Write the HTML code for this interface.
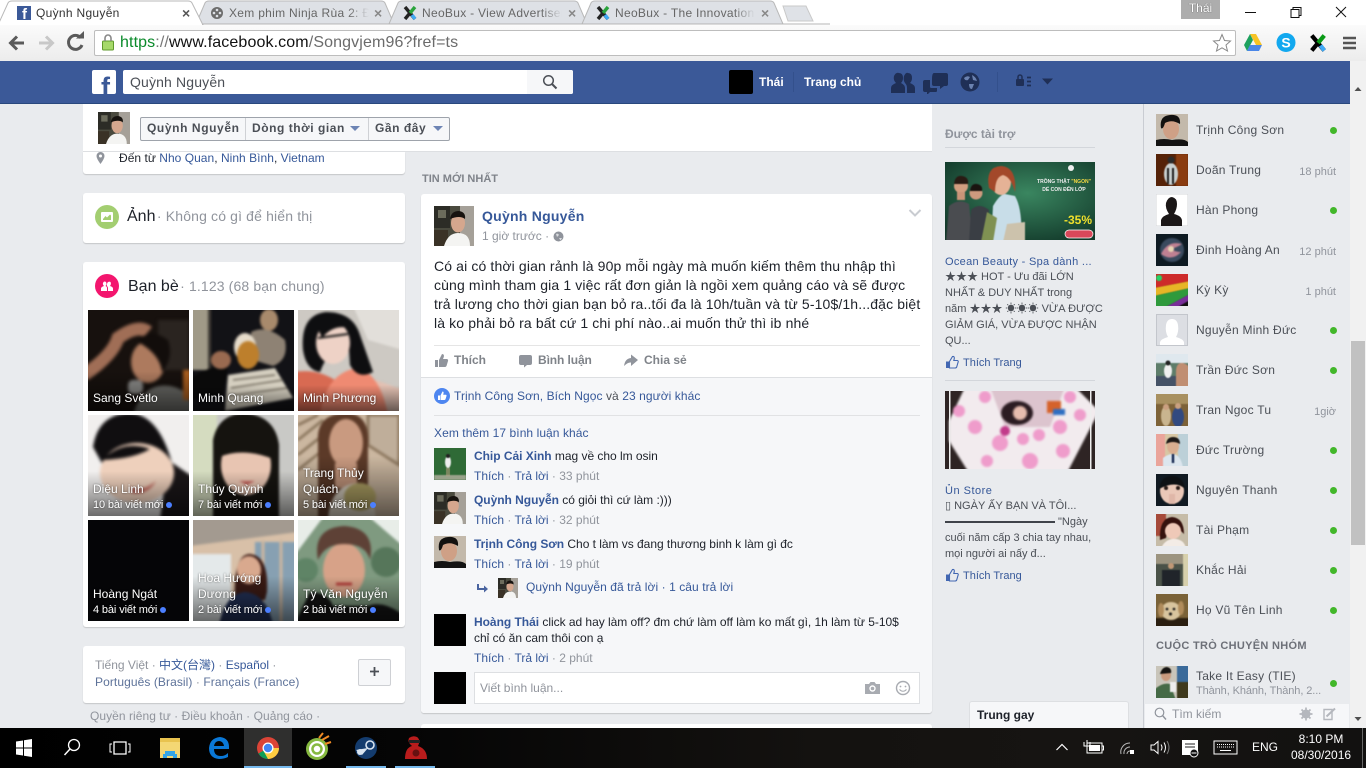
<!DOCTYPE html>
<html lang="vi"><head><meta charset="utf-8"><title>Quỳnh Nguyễn</title>
<style>
html,body{margin:0;padding:0;width:1366px;height:768px;overflow:hidden;background:#e9ebee}
body{position:relative;font:12px/16px "Liberation Sans","Noto Sans CJK SC",sans-serif;color:#1d2129}
.a{position:absolute}
.t{position:absolute;white-space:nowrap;line-height:16px}
.b{font-weight:bold}
.l{color:#365899}
.g{color:#90949c}
.card{position:absolute;background:#fff;border-radius:3px;box-shadow:0 1px 1px rgba(0,0,0,.16)}
svg{position:absolute;display:block;overflow:hidden}
.tab{color:#666;overflow:hidden;-webkit-mask-image:linear-gradient(90deg,#000 85%,transparent);mask-image:linear-gradient(90deg,#000 85%,transparent)}
.x{color:#6a6a6a;font-size:14px;font-weight:bold}
.tile{position:absolute;width:101px;height:101px;overflow:hidden;background:#222}
.tile svg{left:0;top:0}
.tile i{position:absolute;left:0;right:0;bottom:0;height:40px;background:linear-gradient(transparent,rgba(0,0,0,.55))}
.tile span{position:absolute;left:5px;color:#fff;white-space:nowrap;line-height:16px;text-shadow:0 0 2px rgba(0,0,0,.6)}
.tile .s{font-size:11px;bottom:3px;letter-spacing:-.12px}
.tile u{display:inline-block;width:6px;height:6px;border-radius:50%;background:#4b7fff;margin-left:3px;vertical-align:0}
.n{font-size:12px;color:#4b4f56;letter-spacing:.25px}
.d{position:absolute;left:1330px;width:7px;height:7px;border-radius:50%;background:#42b72a}
.m{position:absolute;right:30px;font-size:11px;color:#90949c;line-height:16px}
.ad{font-size:11px;color:#4b4f56}
.act{font-size:12px;color:#365899}
.act em{font-style:normal;color:#90949c}
.tb{color:#fff}
.p{font-size:14px;letter-spacing:.13px}
</style></head><body>

<svg width="0" height="0" style="position:absolute">
<defs>
<symbol id="qn" viewBox="0 0 40 40"><rect width="40" height="40" fill="#4a4a3e"/><rect x="0" y="0" width="16" height="22" fill="#2c2c26"/><rect x="4" y="4" width="8" height="8" fill="#6c6c5c"/><rect x="0" y="24" width="14" height="16" fill="#3a3226"/><rect x="26" y="0" width="14" height="40" fill="#a5a098"/><path d="M10 40 Q14 27 24 27 Q36 27 36 40Z" fill="#f4f4f2"/><ellipse cx="24" cy="17" rx="7" ry="9.5" fill="#d5a78e"/><path d="M16 13 Q17 5 25 5 Q32 6 31 13 Q26 9 16 13Z" fill="#17130f"/></symbol>
<symbol id="ntb" viewBox="0 0 16 16"><path d="M3 2 L13 14" stroke="#222" stroke-width="3.4"/><path d="M13 2 L8 8" stroke="#2aa43c" stroke-width="3.4"/><path d="M8 8 L3 14" stroke="#222" stroke-width="3.4"/><path d="M10 10 L13 14" stroke="#3fa9f5" stroke-width="3.4"/></symbol>
<symbol id="thumb" viewBox="0 0 14 14"><path d="M1 6.5h3v6.5H1z" fill="#4267b2"/><path d="M4.5 6.5 L7.5 1.5 Q9.5 1 9.3 3.5 L8.8 5.5 H12.5 Q13.7 6 13 7.5 L11.7 12 Q11.3 13 10 13 H4.5Z" fill="none" stroke="#4267b2" stroke-width="1.1"/></symbol>
</defs>
</svg>

<!-- CHROME -->
<div class="a" style="left:0;top:0;width:1366px;height:25px;background:#fff"></div>
<svg style="left:0;top:0" width="830" height="26">
<path d="M196 24 L205 3 Q206 1 209 1 H381 Q384 1 385 3 L394 24Z" fill="#dee1e6" stroke="#b9b9b9"/>
<path d="M389 24 L398 3 Q399 1 402 1 H574 Q577 1 578 3 L587 24Z" fill="#dee1e6" stroke="#b9b9b9"/>
<path d="M582 24 L591 3 Q592 1 595 1 H770 Q773 1 774 3 L783 24Z" fill="#dee1e6" stroke="#b9b9b9"/>
<path d="M783 6 H806 L813 21 H788Z" fill="#dfe2e7" stroke="#c9c9c9"/>
<path d="M0 24 H830" stroke="#b4b4b4"/>
<path d="M-2 25 L8 3 Q9 1 12 1 H188 Q191 1 192 3 L203 25Z" fill="#fff" stroke="#b9b9b9"/>
<rect x="-2" y="24" width="204" height="2" fill="#fff"/>
</svg>
<div class="a" style="left:17px;top:6px;width:14px;height:14px;background:#3b5998;overflow:hidden"><b style="position:absolute;left:5px;top:0;color:#fff;font:bold 15px/17px 'Liberation Sans',sans-serif">f</b></div>
<div class="t" style="left:36px;top:5px;width:140px;color:#333;letter-spacing:.3px">Quỳnh Nguyễn</div>
<div class="t x" style="left:182px;top:5px;color:#555">×</div>
<svg style="left:210px;top:6px" width="14" height="14" viewBox="0 0 14 14"><circle cx="7" cy="7" r="6" fill="#6c6c6c"/><circle cx="7" cy="4" r="1.3" fill="#dee1e6"/><circle cx="4" cy="7" r="1.3" fill="#dee1e6"/><circle cx="10" cy="7" r="1.3" fill="#dee1e6"/><circle cx="7" cy="10" r="1.3" fill="#dee1e6"/></svg>
<div class="t tab" style="left:229px;top:5px;width:140px;letter-spacing:.3px">Xem phim Ninja Rùa 2: Đậ</div>
<div class="t x" style="left:374px;top:5px;color:#888">×</div>
<svg style="left:402px;top:5px" width="16" height="16"><use href="#ntb"/></svg>
<div class="t tab" style="left:422px;top:5px;width:140px;letter-spacing:.3px">NeoBux - View Advertisen</div>
<div class="t x" style="left:568px;top:5px;color:#888">×</div>
<svg style="left:595px;top:5px" width="16" height="16"><use href="#ntb"/></svg>
<div class="t tab" style="left:615px;top:5px;width:140px;letter-spacing:.3px">NeoBux - The Innovation i</div>
<div class="t x" style="left:761px;top:5px;color:#888">×</div>

<div class="a" style="left:1181px;top:0;width:39px;height:19px;background:#adadad;color:#fff;text-align:center;font-size:12px;line-height:17px;text-shadow:0 0 1px #333">Thái</div>
<svg style="left:1240px;top:4px" width="112" height="16"><path d="M5 8.500H16" stroke="#111"/><path d="M51 5.500h8v8h-8zM53 5.500v-2h8v8h-2" fill="none" stroke="#111"/><path d="M96 3L106 13M106 3L96 13" stroke="#111"/></svg>

<div class="a" style="left:0;top:25px;width:1366px;height:36px;background:linear-gradient(#fbfbfb,#ececec)"></div>
<svg style="left:0;top:25px" width="95" height="36"><path d="M24 18H11M17 11.500L10.500 18L17 24.500" fill="none" stroke="#5a5a5a" stroke-width="3"/><path d="M39 18H52M46 11.500L52.500 18L46 24.500" fill="none" stroke="#c8c8c8" stroke-width="3"/><path d="M81 13 A7 7 0 1 0 82 20" fill="none" stroke="#5a5a5a" stroke-width="3"/><path d="M76 13.500H84V6Z" fill="#5a5a5a"/></svg>
<div class="a" style="left:94px;top:30px;width:1140px;height:24px;background:#fff;border:1px solid #bdbdbd;border-radius:2px"></div>
<svg style="left:100px;top:33px" width="16" height="20"><rect x="2.500" y="8" width="11" height="9" rx="1" fill="#a6d96a" stroke="#5f9a2c"/><path d="M5 8V5a3 3 0 0 1 6 0v3" fill="none" stroke="#888" stroke-width="1.600"/></svg>
<div class="t" style="left:120px;top:35px;font-size:16px;letter-spacing:.12px;color:#6b6b6b"><span style="color:#0a8a2a">https</span><span style="color:#777">://</span><span style="color:#111">www.facebook.com</span>/Songvjem96?fref=ts</div>
<svg style="left:1212px;top:33px" width="20" height="20"><path d="M10 1.500L12.500 7.500L18.500 8L14 12L15.500 18L10 14.800L4.500 18L6 12L1.500 8L7.500 7.500Z" fill="#fff" stroke="#888"/></svg>
<svg style="left:1243px;top:33px" width="20" height="19" viewBox="0 0 20 19"><path d="M7 1H13L19 12H13Z" fill="#f7c325"/><path d="M7 1L1 12L4 18L10 7Z" fill="#1da15e"/><path d="M4 18H16L19 12H7Z" fill="#4a86e8"/></svg>
<svg style="left:1276px;top:32px" width="20" height="21"><circle cx="10" cy="10.500" r="9.500" fill="#12a8ef"/><text x="10" y="15.500" text-anchor="middle" font-family="Liberation Sans" font-weight="bold" font-size="14" fill="#fff">S</text></svg>
<svg style="left:1308px;top:33px" width="20" height="20" viewBox="0 0 16 16"><path d="M3 2L13 14" stroke="#000" stroke-width="3.400"/><path d="M13 2L8 8" stroke="#0a9a16" stroke-width="3.400"/><path d="M8 8L3 14" stroke="#000" stroke-width="3.400"/><path d="M10 10L13 14" stroke="#3fa9f5" stroke-width="3.400"/></svg>
<svg style="left:1342px;top:35px" width="16" height="16"><path d="M1 3H14M1 8H14M1 13H14" stroke="#555" stroke-width="2.600"/></svg>

<!-- PAGE BG & SCROLLBAR -->
<div class="a" style="left:1350px;top:61px;width:16px;height:667px;background:#f1f1f1"></div>
<div class="a" style="left:1351px;top:341px;width:14px;height:204px;background:#c1c1c1"></div>
<svg style="left:1350px;top:84px" width="16" height="10"><path d="M4.500 7H11.500L8 3Z" fill="#505050"/></svg>
<svg style="left:1350px;top:714px" width="16" height="10"><path d="M4.500 3H11.500L8 7Z" fill="#505050"/></svg>

<!-- FB BAR -->
<div class="a" style="left:0;top:61px;width:1350px;height:42px;background:#3b5998;border-bottom:1px solid #29487d"></div>
<div class="a" style="left:92px;top:70px;width:24px;height:24px;background:#fff;border-radius:2px;overflow:hidden"><b style="position:absolute;left:9px;top:4px;color:#3b5998;font:bold 27px/26px 'Liberation Sans',sans-serif">f</b></div>
<div class="a" style="left:123px;top:70px;width:450px;height:24px;background:#fff;border-radius:2px;overflow:hidden"><div class="a" style="right:0;top:0;width:46px;height:24px;background:#f6f7f9"></div></div>
<div class="t" style="left:130px;top:74px;font-size:14px;letter-spacing:.15px;color:#4b4f56">Quỳnh Nguyễn</div>
<svg style="left:542px;top:74px" width="16" height="16"><circle cx="6.500" cy="6.500" r="4.800" fill="none" stroke="#4b4f56" stroke-width="1.500"/><path d="M10 10L14.500 14.500" stroke="#4b4f56" stroke-width="2"/></svg>
<div class="a" style="left:729px;top:70px;width:24px;height:24px;background:#000;border-radius:2px"></div>
<div class="t b" style="left:759px;top:74px;color:#fff">Thái</div>
<div class="a" style="left:793px;top:72px;width:1px;height:20px;background:#33508c"></div>
<div class="t b" style="left:804px;top:74px;color:#fff">Trang chủ</div>
<svg style="left:888px;top:70px" width="165" height="24" fill="#1f2f56">
<path d="M3 23 V18 Q3 15 8 13 Q5 10 6 6 Q8 2 11 3 Q15 3 15 8 Q15 11 13 13 Q17 15 17 18 V23Z"/><path d="M17 13 Q15 10 16 6 Q18 2 20 3 Q24 3 24 8 Q24 11 22 13 Q27 15 27 18 V23 H19 V18 Q19 15 17 13Z"/>
<path d="M44 9 Q44 3 46 3 H58 Q60 3 60 5 V14 Q60 16 58 16 H56 L52 19 V16 H46 Q44 16 44 14Z"/><path d="M37 10 H42 V17 Q42 18 44 18 H49 V21 Q49 22 47 22 H42 L39 25 V22 H37 Q35 22 35 20 V12 Q35 10 37 10Z"/>
<circle cx="82" cy="12" r="9.500"/><path d="M76 8 Q79 5 82 7 L80 10 Q77 11 76 8ZM84 5 Q88 7 89 11 L85 10ZM81 14 L86 14 L84 19 Q81 19 81 14Z" fill="#6b82b0"/>
<rect x="128" y="9" width="8" height="7" rx="1"/><path d="M130 9V7a2 2 0 0 1 4 0v2" fill="none" stroke="#1f2f56" stroke-width="1.500"/><path d="M139 7.500h4M139 11.500h4M139 15.500h4" stroke="#1f2f56" stroke-width="1.800"/><path d="M154 8.500H165L159.500 14.500Z"/>
</svg>
<div class="a" style="left:997px;top:72px;width:1px;height:20px;background:#33508c"></div>

<!-- STICKY PROFILE BAR -->
<div class="a" style="left:83px;top:104px;width:849px;height:47px;background:#fff;border-bottom:1px solid #dddfe2"></div>
<svg style="left:98px;top:112px" width="32" height="32"><use href="#qn"/></svg>
<div class="a" style="left:140px;top:117px;width:308px;height:22px;background:#f6f7f9;border:1px solid #9ea3ab;border-radius:2px"></div>
<div class="a" style="left:245px;top:118px;width:1px;height:22px;background:#cfd1d5"></div>
<div class="a" style="left:368px;top:118px;width:1px;height:22px;background:#cfd1d5"></div>
<div class="t b" style="left:147px;top:120px;color:#4b4f56;letter-spacing:.6px">Quỳnh Nguyễn</div>
<div class="t b" style="left:252px;top:120px;color:#4b4f56;letter-spacing:.55px">Dòng thời gian</div>
<div class="t b" style="left:375px;top:120px;color:#4b4f56;letter-spacing:.55px">Gần đây</div>
<svg style="left:350px;top:125px" width="100" height="8" fill="#6d84b4"><path d="M0 1H10L5 6Z"/><path d="M83 1H93L88 6Z"/></svg>

<!-- LEFT COLUMN -->
<div class="card" style="left:83px;top:152px;width:322px;height:22px;border-radius:0 0 3px 3px"></div>
<svg style="left:95px;top:151px" width="12" height="14"><path d="M5.500 1 A4 4 0 0 1 9.500 5 Q9.500 7.500 5.500 13 Q1.500 7.500 1.500 5 A4 4 0 0 1 5.500 1Z" fill="#90949c"/><circle cx="5.500" cy="5" r="1.500" fill="#fff"/></svg>
<div class="t" style="left:119px;top:150px;letter-spacing:.03px">Đến từ <span class="l">Nho Quan</span>, <span class="l">Ninh Bình</span>, <span class="l">Vietnam</span></div>

<div class="card" style="left:83px;top:193px;width:322px;height:50px"></div>
<svg style="left:95px;top:205px" width="24" height="24"><circle cx="12" cy="12" r="12" fill="#a3ce71"/><rect x="6" y="7" width="12" height="10" rx="1" fill="#fff"/><path d="M8 14L10.500 11L12 12.500L15 9.500L16 10.500V15H8Z" fill="#a3ce71"/></svg>
<div class="t" style="left:127px;top:208px;font-size:16px">Ảnh <span class="g" style="font-size:14px;margin-left:-3px;letter-spacing:.15px">· Không có gì để hiển thị</span></div>

<div class="card" style="left:83px;top:262px;width:322px;height:365px"></div>
<svg style="left:95px;top:274px" width="24" height="24"><circle cx="12" cy="12" r="12" fill="#f3166e"/><path d="M6 17V14.500Q6 13 9 12Q7.500 10.500 8 9Q8.500 7.500 9.500 7.500Q11.500 7.500 11.500 10Q11.500 11 10.500 12Q12 12.500 12 14V17ZM13 17V14Q13 13 12 12Q11.500 10.500 12.500 8.500Q14 7 15.500 8Q16.500 10 15 12Q18 13 18 14.500V17Z" fill="#fff"/></svg>
<div class="t" style="left:128px;top:278px;font-size:16px">Bạn bè <span class="g" style="font-size:14px;margin-left:-3px;letter-spacing:.13px">· 1.123 (68 bạn chung)</span></div>

<!-- Friend tiles -->
<div class="tile" style="left:88px;top:310px"><svg width="101" height="101"><rect width="101" height="101" fill="#17110e"/><g style="filter:blur(1.5px)"><rect x="70" y="10" width="31" height="50" fill="#2a2420"/><path d="M45 105 Q55 72 82 76 Q105 80 105 105Z" fill="#6e6e6a"/><path d="M-4 65 Q25 45 30 28 Q50 14 60 22" stroke="#a06e56" stroke-width="13" fill="none"/><ellipse cx="60" cy="52" rx="17" ry="21" fill="#ad7a5e"/><path d="M50 32 Q60 16 80 30 Q86 48 74 62 Q72 44 50 32Z" fill="#120d0b"/><rect x="40" y="70" width="15" height="14" rx="5" fill="#8e8e8c"/><rect x="95" y="60" width="8" height="30" fill="#ab5e1e"/></g></svg><i></i><span style="bottom:5px">Sang Světlo</span></div>
<div class="tile" style="left:193px;top:310px"><svg width="101" height="101"><rect width="101" height="101" fill="#121216"/><g style="filter:blur(1.2px)"><rect x="-4" y="-4" width="19" height="64" fill="#a09a88"/><rect x="15" y="-4" width="3" height="64" fill="#403c36"/><ellipse cx="76" cy="10" rx="9" ry="11" fill="#a88a6c"/><path d="M58 22 Q74 14 92 30 Q96 50 80 56 L60 50Z" fill="#8e8274"/><ellipse cx="52" cy="37" rx="11" ry="14" fill="#e6dccb"/><ellipse cx="55" cy="45" rx="11" ry="14" fill="#bd7f2c"/><path d="M-4 70 Q15 54 35 58 L30 85 L-4 90Z" fill="#0a0a0a"/><ellipse cx="28" cy="50" rx="10" ry="9" fill="#9a6a50"/><path d="M35 65 L82 58 L100 88 L32 101Z" fill="#d5cfc0"/><path d="M40 70L82 65M38 78L90 70M36 86L94 78" stroke="#70695c" stroke-width="1.500"/></g></svg><i style="height:26px"></i><span style="bottom:5px">Minh Quang</span></div>
<div class="tile" style="left:298px;top:310px"><svg width="101" height="101"><rect width="101" height="101" fill="#cdc9c3"/><g style="filter:blur(1.2px)"><path d="M55 -4H105V40L70 30Z" fill="#e2dfda"/><path d="M78 70L105 80V105H70Z" fill="#e2c0b2"/><path d="M-4 62 Q20 58 40 72 L30 105 H-4Z" fill="#d86a52"/><path d="M22 105 Q28 62 60 58 Q82 64 90 105Z" fill="#ef8a72"/><path d="M5 40 Q2 5 28 2 Q55 2 62 25 L75 62 Q60 70 52 55 L50 25 Q30 40 22 62 Q8 60 5 40Z" fill="#0e0e10"/><ellipse cx="35" cy="33" rx="17" ry="21" fill="#eed2c6"/><path d="M20 28L50 24" stroke="#111" stroke-width="2"/><path d="M17 12 Q35 -2 52 18 Q35 14 24 28Z" fill="#0e0e10"/></g></svg><i style="height:26px"></i><span style="bottom:5px">Minh Phương</span></div>

<div class="tile" style="left:88px;top:415px"><svg width="101" height="101"><rect width="101" height="101" fill="#f1efee"/><g style="filter:blur(1.5px)"><path d="M80 45 L105 62 V105 H72Z" fill="#1a1618"/><path d="M5 32 Q10 0 40 -2 Q70 -2 84 48 L75 55 L15 50Z" fill="#100e10"/><ellipse cx="49" cy="58" rx="37" ry="30" fill="#eed0bc"/><path d="M14 45 Q35 24 62 34 Q45 44 14 45Z" fill="#100e10"/><path d="M42 72 Q54 78 68 66 Q60 80 44 78Z" fill="#c26258"/></g></svg><i style="height:45px"></i><span style="bottom:19px">Diệu Linh</span><span class="s">10 bài viết mới<u></u></span></div>
<div class="tile" style="left:193px;top:415px"><svg width="101" height="101"><rect width="101" height="101" fill="#c9c9c6"/><g style="filter:blur(1.2px)"><rect x="-4" y="-4" width="28" height="109" fill="#d5dcc0"/><path d="M20 105 V25 Q25 0 50 -2 Q82 0 86 30 V105Z" fill="#15130f"/><ellipse cx="53" cy="50" rx="25" ry="30" fill="#e8c5b2"/><path d="M26 42 Q30 18 52 16 Q78 18 80 44 Q50 32 26 42Z" fill="#15130f"/><path d="M46 66 H62 L54 70Z" fill="#c35f58"/></g></svg><i style="height:45px"></i><span style="bottom:19px">Thúy Quỳnh</span><span class="s">7 bài viết mới<u></u></span></div>
<div class="tile" style="left:298px;top:415px"><svg width="101" height="101"><rect width="101" height="101" fill="#cbb7a0"/><g style="filter:blur(1.2px)"><path d="M0 10L20 0M0 25L25 5M0 40L25 20M0 55L25 35M70 0 H101V50L70 30Z" stroke="#8f7a62" stroke-width="3" fill="#bfae9a"/><path d="M20 105 V20 Q22 -2 50 -2 Q72 0 70 30 V70 L60 105Z" fill="#5c3a28"/><ellipse cx="48" cy="28" rx="17" ry="24" fill="#c99a80"/><rect x="37" y="48" width="22" height="25" fill="#c99a80"/><path d="M30 105 Q32 70 60 68 Q75 72 78 105Z" fill="#e0d7c8"/><ellipse cx="62" cy="82" rx="16" ry="14" fill="#b6a868"/></g></svg><i style="height:60px"></i><span style="bottom:35px">Trang Thủy</span><span style="bottom:19px">Quách</span><span class="s">5 bài viết mới<u></u></span></div>

<div class="tile" style="left:88px;top:520px;background:#050507"><span style="bottom:19px">Hoàng Ngát</span><span class="s">4 bài viết mới<u></u></span></div>
<div class="tile" style="left:193px;top:520px"><svg width="101" height="101"><rect width="101" height="101" fill="#d8c0a8"/><g style="filter:blur(1.2px)"><rect x="-4" y="34" width="42" height="71" fill="#e4e9ea"/><path d="M-4 -4H105V12L-4 26Z" fill="#a39a90"/><rect x="62" y="22" width="43" height="83" fill="#87a0b2"/><path d="M70 20V105M88 20V105" stroke="#cdb7a0" stroke-width="3"/><path d="M42 80 Q40 34 57 34 Q76 36 74 72 L72 80Z" fill="#3a1a14"/><ellipse cx="56" cy="50" rx="12" ry="14" fill="#d9a98e"/><path d="M26 105 Q32 74 52 72 Q74 74 80 105Z" fill="#223055"/></g></svg><i style="height:45px"></i><span style="bottom:35px">Hoa Hướng</span><span style="bottom:19px">Dương</span><span class="s">2 bài viết mới<u></u></span></div>
<div class="tile" style="left:298px;top:520px"><svg width="101" height="101"><rect width="101" height="101" fill="#7f9a80"/><g style="filter:blur(1.2px)"><path d="M-4 -4H26L-4 36ZM70 -4H105V26Z" fill="#e8ede8"/><circle cx="88" cy="42" r="15" fill="#56765a"/><circle cx="8" cy="50" r="12" fill="#5f8466"/><path d="M-4 105 L12 72 Q30 72 35 86 H70 Q85 80 105 95 V105Z" fill="#141414"/><ellipse cx="46" cy="50" rx="21" ry="27" fill="#d7a288"/><path d="M20 40 Q14 8 46 6 Q78 8 72 40 Q68 24 46 24 Q27 24 20 40Z" fill="#5e4136"/><path d="M38 64 H54" stroke="#b33d3a" stroke-width="3"/></g></svg><i style="height:45px"></i><span style="bottom:19px;letter-spacing:.15px">Tý Văn Nguyễn</span><span class="s">2 bài viết mới<u></u></span></div>

<div class="card" style="left:83px;top:646px;width:322px;height:57px"></div>
<div class="t g" style="left:95px;top:657px"><span>Tiếng Việt</span> · <span class="l">中文(台灣)</span> · <span class="l">Español</span> ·</div>
<div class="t g" style="left:95px;top:674px;letter-spacing:.08px"><span style="color:#5d7299">Português (Brasil)</span> · <span style="color:#5d7299">Français (France)</span></div>
<div class="a" style="left:358px;top:659px;width:31px;height:25px;background:#f6f7f9;border:1px solid #ced0d4;border-radius:2px"></div>
<svg style="left:369px;top:666px" width="12" height="12"><path d="M5.500 1V10M1 5.500H10" stroke="#4b4f56" stroke-width="1.800"/></svg>
<div class="t g" style="left:90px;top:708px;letter-spacing:.05px">Quyền riêng tư · Điều khoản · Quảng cáo ·</div>

<!-- MIDDLE COLUMN -->
<div class="t b g" style="left:422px;top:171px;font-size:11px;color:#7f838a">TIN MỚI NHẤT</div>
<div class="card" style="left:421px;top:194px;width:511px;height:519px"></div>
<div class="a" style="left:421px;top:377px;width:511px;height:336px;background:#f6f7f9;border-top:1px solid #dddfe2;box-sizing:border-box;border-radius:0 0 3px 3px"></div>
<svg style="left:434px;top:206px" width="40" height="40"><use href="#qn"/></svg>
<div class="t b l" style="left:482px;top:208px;font-size:14px;letter-spacing:.25px">Quỳnh Nguyễn</div>
<div class="t g" style="left:482px;top:228px">1 giờ trước ·</div>
<svg style="left:553px;top:231px" width="11" height="11"><circle cx="5.500" cy="5.500" r="5" fill="#8f939b"/><path d="M3 3Q5 2 6 4L4 6ZM6 7H9L7.500 9.500Z" fill="#d9dbde"/></svg>
<svg style="left:908px;top:208px" width="14" height="10"><path d="M1.500 2L7 7.500L12.500 2" fill="none" stroke="#c9ccd1" stroke-width="2"/></svg>
<div class="t p" style="left:434px;top:258px">Có ai có thời gian rảnh là 90p mỗi ngày mà muốn kiếm thêm thu nhập thì</div>
<div class="t p" style="left:434px;top:277px">cùng mình tham gia 1 việc rất đơn giản là ngồi xem quảng cáo và sẽ được</div>
<div class="t p" style="left:434px;top:296px">trả lương cho thời gian bạn bỏ ra..tối đa là 10h/tuần và từ 5-10$/1h...đặc biệt</div>
<div class="t p" style="left:434px;top:315px">là ko phải bỏ ra bất cứ 1 chi phí nào..ai muốn thử thì ib nhé</div>
<div class="a" style="left:434px;top:345px;width:486px;height:1px;background:#e5e5e5"></div>
<svg style="left:434px;top:353px" width="210" height="16" fill="#90949c"><path d="M1 7H4V14H1ZM5 7L8 1Q10.500 1 9.800 4L9 6H13Q14.500 6.500 14 8L12.500 13Q12 14 11 14H5Z"/><path d="M87 2H96Q98 2 98 4V10Q98 12 96 12H93L90 14.500V12H87Q85 12 85 10V4Q85 2 87 2Z"/><path d="M204 7L197 1.500V5Q191 5.500 190 13Q194 9 197 9.500V13Z"/></svg>
<div class="t b" style="left:454px;top:352px;color:#7f8389">Thích</div>
<div class="t b" style="left:538px;top:352px;color:#7f8389;letter-spacing:-.1px">Bình luận</div>
<div class="t b" style="left:644px;top:352px;color:#7f8389">Chia sẻ</div>

<svg style="left:434px;top:388px" width="16" height="16"><circle cx="8" cy="8" r="8" fill="#4e86f0"/><path d="M4 7.500H6V12H4ZM6.500 7.500L8.500 3.500Q10 3.500 9.500 5.500L9.200 6.800H12Q12.800 7 12.500 8L11.500 11.300Q11.200 12 10.500 12H6.500Z" fill="#fff"/></svg>
<div class="t l" style="left:454px;top:388px;letter-spacing:.07px">Trịnh Công Sơn, Bích Ngọc <span style="color:#4b4f56">và</span> 23 người khác</div>
<div class="a" style="left:434px;top:415px;width:486px;height:1px;background:#e1e2e4"></div>
<div class="t l" style="left:434px;top:425px;letter-spacing:.07px">Xem thêm 17 bình luận khác</div>

<svg style="left:434px;top:448px" width="32" height="32"><rect width="32" height="32" fill="#2f6a36"/><g style="filter:blur(.6px)"><rect y="27" width="32" height="5" fill="#99a28a"/><ellipse cx="14" cy="14" rx="3" ry="6" fill="#eee"/><circle cx="14" cy="8" r="2" fill="#222"/><path d="M13 20V28M15 20V28" stroke="#c9a48a"/></g></svg>
<div class="t" style="left:474px;top:448px;letter-spacing:-.03px"><span class="b l">Chip Cải Xinh</span> mag về cho lm osin</div>
<div class="t act" style="left:474px;top:468px">Thích <em>·</em> Trả lời <em>· 33 phút</em></div>

<svg style="left:434px;top:492px" width="32" height="32"><use href="#qn"/></svg>
<div class="t" style="left:474px;top:492px;letter-spacing:-.03px"><span class="b l">Quỳnh Nguyễn</span> có giỏi thì cứ làm :)))</div>
<div class="t act" style="left:474px;top:512px">Thích <em>·</em> Trả lời <em>· 32 phút</em></div>

<svg style="left:434px;top:536px" width="32" height="32" viewBox="0 0 32 32"><rect width="32" height="32" fill="#c3b9ab"/><path d="M0 32V26Q8 24 16 26Q28 24 32 28V32Z" fill="#131313"/><ellipse cx="15" cy="15" rx="8" ry="10" fill="#cfa086"/><path d="M5 14Q3 2 14 1Q25 0 24 10Q16 5 9 9Q7 16 5 14Z" fill="#131110"/></svg>
<div class="t" style="left:474px;top:536px;letter-spacing:-.03px"><span class="b l">Trịnh Công Sơn</span> Cho t làm vs đang thương binh k làm gì đc</div>
<div class="t act" style="left:474px;top:556px">Thích <em>·</em> Trả lời <em>· 19 phút</em></div>
<svg style="left:476px;top:583px" width="13" height="12"><path d="M2 1V6H9" fill="none" stroke="#4a64a0" stroke-width="2"/><path d="M8 2.500L12 6L8 9.500Z" fill="#4a64a0"/></svg>
<svg style="left:498px;top:578px" width="20" height="20"><use href="#qn"/></svg>
<div class="t l" style="left:526px;top:579px;letter-spacing:.07px">Quỳnh Nguyễn đã trả lời · 1 câu trả lời</div>

<div class="a" style="left:434px;top:614px;width:32px;height:32px;background:#000"></div>
<div class="t" style="left:474px;top:614px;letter-spacing:-.03px"><span class="b l">Hoàng Thái</span> click ad hay làm off? đm chứ làm off làm ko mất gì, 1h làm từ 5-10$</div>
<div class="t" style="left:474px;top:630px">chỉ có ăn cam thôi con ạ</div>
<div class="t act" style="left:474px;top:650px">Thích <em>·</em> Trả lời <em>· 2 phút</em></div>

<div class="a" style="left:434px;top:672px;width:32px;height:32px;background:#000"></div>
<div class="a" style="left:474px;top:672px;width:444px;height:30px;background:#fff;border:1px solid #dddfe2"></div>
<div class="t g" style="left:480px;top:680px">Viết bình luận...</div>
<svg style="left:864px;top:680px" width="48" height="16"><path d="M1 4H5L6.500 2H10.500L12 4H16V14H1Z" fill="#a8abb1"/><circle cx="8.500" cy="8.500" r="3.200" fill="#fff"/><circle cx="8.500" cy="8.500" r="1.800" fill="#a8abb1"/><circle cx="39" cy="8" r="6.500" fill="none" stroke="#a8abb1" stroke-width="1.400"/><circle cx="36.500" cy="6.500" r=".9" fill="#a8abb1"/><circle cx="41.500" cy="6.500" r=".9" fill="#a8abb1"/><path d="M35.500 9.500Q39 13 42.500 9.500" fill="none" stroke="#a8abb1"/></svg>

<div class="card" style="left:421px;top:724px;width:511px;height:10px"></div>

<!-- ADS -->
<div class="t b" style="left:945px;top:126px;color:#90949c">Được tài trợ</div>
<div class="a" style="left:945px;top:147px;width:150px;height:1px;background:#d3d6db"></div>
<div class="a" style="left:945px;top:162px;width:150px;height:78px;overflow:hidden;background:#1d5c41">
<svg style="left:0;top:0" width="150" height="78"><defs><radialGradient id="gb" cx="55%" cy="40%" r="70%"><stop offset="0" stop-color="#3a8660"/><stop offset="1" stop-color="#12392a"/></radialGradient></defs><rect width="150" height="78" fill="url(#gb)"/><g style="filter:blur(.4px)"><path d="M1 80 L4 44 Q14 36 24 42 L28 80Z" fill="#4a4c50"/><circle cx="16" cy="24" r="7" fill="#d39e80"/><rect x="12" y="30" width="8" height="8" fill="#c99478"/><path d="M9 22Q10 13 17 14Q24 15 23 22Z" fill="#2a1b14"/><path d="M24 80L26 48Q34 40 44 48L42 80Z" fill="#3a3e44"/><circle cx="31" cy="31" r="6.500" fill="#cd9a7e"/><path d="M25 29Q26 21 32 22Q38 23 37 29Z" fill="#1a1410"/><path d="M46 80 L48 44 Q55 32 60 32 L70 34 Q78 48 76 80Z" fill="#c8dde8"/><path d="M36 80L42 50L52 56L48 80Z" fill="#7f9152"/><ellipse cx="56" cy="20" rx="10" ry="13" fill="#e5b296"/><path d="M44 26Q40 5 56 4Q72 5 70 30Q66 15 58 13Q50 15 50 30Z" fill="#a3482a"/><path d="M58 80L62 62L80 60L80 80Z" fill="#ccc2ac"/></g><text x="119" y="21" text-anchor="middle" font-family="Liberation Sans" font-weight="bold" font-size="5" fill="#eee">TRỒNG THẬT <tspan fill="#f5d942">"NGON"</tspan></text><text x="119" y="29" text-anchor="middle" font-family="Liberation Sans" font-weight="bold" font-size="5" fill="#eee">DỂ CON ĐẾN LỚP</text><text x="133" y="62" text-anchor="middle" font-family="Liberation Sans" font-weight="bold" font-size="12" fill="#f0e02c">-35%</text><rect x="120" y="68" width="28" height="8" rx="4" fill="#d9485a" stroke="#fff" stroke-width=".7"/><circle cx="126" cy="6" r="3" fill="#eee"/></svg></div>
<div class="t l" style="left:945px;top:254px;font-size:11px;letter-spacing:.3px">Ocean Beauty - Spa dành ...</div>
<div class="t ad" style="left:945px;top:269px">★★★ HOT - Ưu đãi LỚN</div>
<div class="t ad" style="left:945px;top:285px">NHẤT &amp; DUY NHẤT trong</div>
<div class="t ad" style="left:945px;top:301px">năm ★★★ ☀☀☀ VỪA ĐƯỢC</div>
<div class="t ad" style="left:945px;top:317px">GIẢM GIÁ, VỪA ĐƯỢC NHẬN</div>
<div class="t ad" style="left:945px;top:333px">QU...</div>
<svg style="left:945px;top:355px" width="14" height="14"><use href="#thumb"/></svg>
<div class="t l" style="left:963px;top:355px;font-size:11px">Thích Trang</div>
<div class="a" style="left:945px;top:380px;width:150px;height:1px;background:#d3d6db"></div>
<div class="a" style="left:945px;top:391px;width:150px;height:78px;overflow:hidden;background:#2a2020">
<svg style="left:0;top:0" width="150" height="78"><rect width="150" height="78" fill="#2e2424"/><g style="filter:blur(1px)"><path d="M4 30 L20 -4 H130 L154 20 L122 82 H24 L4 50Z" fill="#f2ebee"/><path d="M45 -4H120L105 36H60Z" fill="#dcc4ce"/><ellipse cx="72" cy="22" rx="16" ry="12" fill="#2b1c22"/><ellipse cx="75" cy="22" rx="7" ry="7" fill="#e6bcae"/><rect x="102" y="10" width="14" height="12" fill="#d5622a"/><rect x="108" y="18" width="12" height="6" fill="#2f6ec2"/><g fill="#ef9ccb"><circle cx="14" cy="20" r="6"/><circle cx="30" cy="36" r="7"/><circle cx="55" cy="52" r="8"/><circle cx="78" cy="48" r="6"/><circle cx="94" cy="44" r="6"/><circle cx="115" cy="36" r="7"/><circle cx="135" cy="24" r="6"/><circle cx="85" cy="70" r="8"/><circle cx="118" cy="60" r="7"/><circle cx="40" cy="6" r="6"/><circle cx="125" cy="6" r="6"/><circle cx="42" cy="70" r="6"/></g><circle cx="60" cy="40" r="5" fill="#c23a8a"/></g><rect x="4" y="0" width="1.500" height="78" fill="#eee"/><rect x="145" y="0" width="1.500" height="78" fill="#eee"/></svg></div>
<div class="t l" style="left:945px;top:483px;font-size:11px;letter-spacing:.5px">Ủn Store</div>
<div class="t ad" style="left:945px;top:498px">▯ NGÀY ẤY BẠN VÀ TÔI...</div>
<div class="a" style="left:945px;top:521px;width:110px;height:2px;background:#3f434a"></div>
<div class="t ad" style="left:1058px;top:514px">"Ngày</div>
<div class="t ad" style="left:945px;top:530px">cuối năm cấp 3 chia tay nhau,</div>
<div class="t ad" style="left:945px;top:546px">mọi người ai nấy đ...</div>
<svg style="left:945px;top:568px" width="14" height="14"><use href="#thumb"/></svg>
<div class="t l" style="left:963px;top:568px;font-size:11px">Thích Trang</div>

<div class="a" style="left:969px;top:701px;width:160px;height:27px;background:#f6f7f9;border:1px solid #dddfe2;border-bottom:0;border-radius:3px 3px 0 0;box-sizing:border-box"></div>
<div class="t b" style="left:977px;top:707px;color:#1d2129">Trung gay</div>

<!-- CHAT -->
<div class="a" style="left:1143px;top:104px;width:1px;height:624px;background:#c9ccd2"></div>
<svg style="left:1156px;top:114px" width="32" height="32" viewBox="0 0 32 32"><rect width="32" height="32" fill="#c3b9ab"/><path d="M0 32V26Q8 24 16 26Q28 24 32 28V32Z" fill="#131313"/><ellipse cx="15" cy="15" rx="8" ry="10" fill="#cfa086"/><path d="M5 14Q3 2 14 1Q25 0 24 10Q16 5 9 9Q7 16 5 14Z" fill="#131110"/></svg>
<div class="t n" style="left:1196px;top:122px">Trịnh Công Sơn</div><div class="d" style="top:127px"></div>

<svg style="left:1156px;top:154px" width="32" height="32"><rect width="32" height="32" fill="#552208"/><g style="filter:blur(.6px)"><rect x="20" width="12" height="32" fill="#8a3c10"/><ellipse cx="15" cy="20" rx="7" ry="11" fill="#c9d0d0"/><circle cx="15" cy="6" r="3.500" fill="#2b2b2b"/><path d="M12 14V30M17 14V30" stroke="#222" stroke-width="2"/></g></svg>
<div class="t n" style="left:1196px;top:162px">Doãn Trung</div><div class="m" style="top:164px">18 phút</div>

<svg style="left:1156px;top:194px" width="32" height="32"><rect width="32" height="32" fill="#fff" stroke="#d5d7da"/><path d="M5 32V26Q6 22 13 20Q9 14 10 9Q12 3 16 3Q21 4 21 10Q21 15 18 20Q26 22 26 27V32Z" fill="#1b1717"/></svg>
<div class="t n" style="left:1196px;top:202px">Hàn Phong</div><div class="d" style="top:207px"></div>

<svg style="left:1156px;top:234px" width="32" height="32"><rect width="32" height="32" fill="#0e1a22"/><g style="filter:blur(.7px)"><circle cx="16" cy="16" r="12" fill="#3a4a5e"/><path d="M5 20Q12 6 26 10Q20 14 14 15Q20 18 25 18Q16 28 5 20Z" fill="#c08092"/><circle cx="15" cy="15" r="3" fill="#e8d5b4"/></g></svg>
<div class="t n" style="left:1196px;top:242px">Đinh Hoàng An</div><div class="m" style="top:244px">12 phút</div>

<svg style="left:1156px;top:274px" width="32" height="32"><rect width="32" height="32" fill="#111"/><g style="filter:blur(.5px)"><path d="M-2 -2H34V7L-2 14Z" fill="#cd2a2a"/><path d="M-2 14L34 7V14L-2 22Z" fill="#e7b526"/><path d="M-2 22L34 14V20L8 34H-2Z" fill="#2f9a3c"/><path d="M8 34L34 20V26L20 34Z" fill="#7a2e9a"/><circle cx="3" cy="4" r="3" fill="#25d366"/></g></svg>
<div class="t n" style="left:1196px;top:282px">Kỳ Kỳ</div><div class="m" style="top:284px">1 phút</div>

<svg style="left:1156px;top:314px" width="32" height="32"><rect x=".5" y=".5" width="31" height="31" fill="#dcdee3" stroke="#c3c6cc"/><path d="M4 31V28Q5 25 12 23Q9 18 10 11Q11 5 16 5Q21 5 22 11Q23 18 20 23Q27 25 28 28V31Z" fill="#fff"/></svg>
<div class="t n" style="left:1196px;top:322px">Nguyễn Minh Đức</div><div class="d" style="top:327px"></div>

<svg style="left:1156px;top:354px" width="32" height="32"><rect width="32" height="32" fill="#5e7d6a"/><g style="filter:blur(.6px)"><rect x="-2" y="-2" width="36" height="11" fill="#dfe8ee"/><rect x="-2" y="22" width="36" height="12" fill="#455266"/><ellipse cx="12" cy="17" rx="4" ry="7" fill="#f0f0f0"/><circle cx="12" cy="9" r="2.500" fill="#222"/><path d="M20 34V18Q20 9 26 9Q34 10 34 18V34Z" fill="#c08e72"/></g></svg>
<div class="t n" style="left:1196px;top:362px">Trần Đức Sơn</div><div class="d" style="top:367px"></div>

<svg style="left:1156px;top:394px" width="32" height="32"><rect width="32" height="32" fill="#7d6238"/><g style="filter:blur(.6px)"><rect x="-2" y="-2" width="36" height="12" fill="#a89060"/><ellipse cx="10" cy="22" rx="5" ry="10" fill="#c9b58f"/><ellipse cx="22" cy="23" rx="6" ry="10" fill="#324a80"/><circle cx="22" cy="12" r="3" fill="#caa080"/><circle cx="10" cy="13" r="3" fill="#caa080"/></g></svg>
<div class="t n" style="left:1196px;top:402px">Tran Ngoc Tu</div><div class="m" style="top:404px">1giờ</div>

<svg style="left:1156px;top:434px" width="32" height="32"><rect width="32" height="32" fill="#d8c7a4"/><g style="filter:blur(.6px)"><rect x="-2" y="-2" width="11" height="36" fill="#eaa49a"/><rect x="22" y="-2" width="12" height="36" fill="#bcd0d8"/><path d="M7 34V24Q12 20 17 20Q25 21 27 34Z" fill="#dce6ee"/><ellipse cx="17" cy="12" rx="6" ry="8" fill="#d9ae90"/><path d="M10 10Q11 3 17 3Q24 3 24 10Q17 6 10 10Z" fill="#1e1a18"/><path d="M17 20V29" stroke="#1d2f57" stroke-width="2.500"/></g></svg>
<div class="t n" style="left:1196px;top:442px">Đức Trường</div><div class="d" style="top:447px"></div>

<svg style="left:1156px;top:474px" width="32" height="32"><rect width="32" height="32" fill="#111a22"/><g style="filter:blur(.6px)"><ellipse cx="16" cy="17" rx="12" ry="13" fill="#eac8b8"/><path d="M3 15Q5 2 16 2Q27 2 29 15Q20 6 3 15Z" fill="#0e1114"/><circle cx="10" cy="14" r="2" fill="#2a1c18"/><circle cx="22" cy="14" r="2" fill="#2a1c18"/><path d="M13 20H19V30H13Z" fill="#dfb7a8"/></g></svg>
<div class="t n" style="left:1196px;top:482px">Nguyên Thanh</div><div class="d" style="top:487px"></div>

<svg style="left:1156px;top:514px" width="32" height="32"><rect width="32" height="32" fill="#c6bca8"/><g style="filter:blur(.6px)"><rect x="-2" y="-2" width="12" height="24" fill="#a64a3a"/><path d="M4 26Q3 4 16 3Q28 4 28 20L22 14Q12 10 10 24Z" fill="#36120e"/><ellipse cx="17" cy="17" rx="8" ry="8" fill="#efc9b8"/><path d="M5 34Q10 24 20 25Q28 26 30 34Z" fill="#f3ece6"/></g></svg>
<div class="t n" style="left:1196px;top:522px">Tài Phạm</div><div class="d" style="top:527px"></div>

<svg style="left:1156px;top:554px" width="32" height="32"><rect width="32" height="32" fill="#4a5248"/><g style="filter:blur(.6px)"><rect x="-2" y="-2" width="36" height="12" fill="#9c9480"/><rect x="27" y="-2" width="7" height="36" fill="#d7d0ac"/><rect x="6" y="16" width="18" height="18" fill="#20242a"/><circle cx="15" cy="12" r="3" fill="#c09876"/></g></svg>
<div class="t n" style="left:1196px;top:562px">Khắc Hải</div><div class="d" style="top:567px"></div>

<svg style="left:1156px;top:594px" width="32" height="32"><rect width="32" height="32" fill="#7a6238"/><g style="filter:blur(.8px)"><rect x="-2" y="24" width="36" height="10" fill="#2a1e10"/><ellipse cx="15" cy="17" rx="10" ry="9" fill="#d8c49e"/><ellipse cx="5" cy="16" rx="3" ry="7" fill="#b08c5c"/><ellipse cx="25" cy="14" rx="3" ry="7" fill="#b08c5c"/><circle cx="11" cy="15" r="1.300" fill="#111"/><circle cx="18" cy="15" r="1.300" fill="#111"/><circle cx="14.500" cy="20" r="1.500" fill="#111"/></g></svg>
<div class="t n" style="left:1196px;top:602px">Họ Vũ Tên Linh</div><div class="d" style="top:607px"></div>

<div class="t b" style="left:1156px;top:638px;font-size:11px;color:#6d7078;letter-spacing:.3px">CUỘC TRÒ CHUYỆN NHÓM</div>

<svg style="left:1156px;top:666px" width="32" height="32"><rect width="32" height="32" fill="#c9c5ba"/><g style="filter:blur(.5px)"><rect x="21" y="-2" width="13" height="18" fill="#3a6a9a"/><rect x="21" y="16" width="13" height="18" fill="#3f3a1e"/><ellipse cx="10" cy="9" rx="5" ry="6" fill="#c99a7e"/><path d="M4 8Q6 1 11 1Q16 2 15 7Z" fill="#161412"/><path d="M-2 24Q6 16 14 18L20 34H-2Z" fill="#456a46"/><rect x="14" y="16" width="6" height="10" fill="#eee"/></g></svg>
<div class="t n" style="left:1196px;top:668px">Take It Easy (TIE)</div>
<div class="t" style="left:1196px;top:683px;font-size:11px;color:#90949c;letter-spacing:-.1px">Thành, Khánh, Thành, 2...</div>
<div class="d" style="top:680px"></div>

<div class="a" style="left:1145px;top:703px;width:204px;height:25px;background:#f6f7f9;border-top:1px solid #e9ebee;box-sizing:border-box"></div>
<svg style="left:1154px;top:707px" width="13" height="14"><circle cx="5.500" cy="5.500" r="4.300" fill="none" stroke="#90949c" stroke-width="1.200"/><path d="M8.500 8.500L12 12.500" stroke="#90949c" stroke-width="1.400"/></svg>
<div class="t g" style="left:1172px;top:706px">Tìm kiếm</div>
<svg style="left:1299px;top:707px" width="40" height="14"><circle cx="7" cy="7" r="4.500" fill="#b4b7bd"/><circle cx="7" cy="7" r="1.700" fill="#f6f7f9"/><path d="M7 0.500V13.500M.5 7H13.500M2.500 2.500L11.500 11.500M11.500 2.500L2.500 11.500" stroke="#b4b7bd" stroke-width="1.700"/><path d="M25 2.500H33V12.500H25Z" fill="none" stroke="#b4b7bd" stroke-width="1.400"/><path d="M27.500 9.500L36 1.500" stroke="#b4b7bd" stroke-width="2"/></svg>

<!-- TASKBAR -->
<div class="a" style="left:0;top:728px;width:1366px;height:40px;background:linear-gradient(90deg,#000 0,#050505 30%,#141210 60%,#161412 80%,#121110 100%)"></div>
<div class="a" style="left:244px;top:728px;width:48px;height:40px;background:#2f2f2e"></div>
<div class="a" style="left:244px;top:766px;width:48px;height:2px;background:#76b9ed"></div>
<div class="a" style="left:346px;top:766px;width:40px;height:2px;background:#76b9ed"></div>
<div class="a" style="left:395px;top:766px;width:40px;height:2px;background:#76b9ed"></div>
<svg style="left:0;top:728px" width="450" height="40">
<path d="M16 13.500L23 12.500V19.500H16ZM24 12.300L32 11V19.500H24ZM16 20.500H23V27.500L16 26.500ZM24 20.500H32V29L24 27.700Z" fill="#fff"/>
<circle cx="74" cy="17" r="5.500" fill="none" stroke="#fff" stroke-width="1.300"/><path d="M70 21L64.500 27" stroke="#fff" stroke-width="1.500"/>
<path d="M114 14H126V26H114Z" fill="none" stroke="#fff" stroke-width="1.300"/><path d="M112 16H110V24H112M128 16H130V24H128" fill="none" stroke="#fff"/>
<path d="M160 10H172L174 12H180V30H160Z" fill="#f4d774"/><path d="M160 10H180V14H160Z" fill="#e9c34f"/><path d="M165 28V23H175V28H172V26H168V28Z" fill="#35a5e6"/><path d="M163 30V26H177V30H173V28H167V30Z" fill="#35a5e6"/>
<path d="M228 21H214Q214 28 221 28Q225 28 228 25V29Q224 31 219 31Q209 30 209 20Q210 10 220 9Q229 10 229 19V21ZM214 18H224Q223 13 219 13Q215 13 214 18Z" fill="#0a78d7"/>
<circle cx="268" cy="20" r="11" fill="#db4437"/><path d="M268 20L258.500 25.500A11 11 0 0 0 268 31L274 20Z" fill="#0f9d58"/><path d="M268 20H279A11 11 0 0 1 268 31L263 22Z" fill="#ffcd40"/><circle cx="268" cy="20" r="5.500" fill="#fff"/><circle cx="268" cy="20" r="4.200" fill="#4285f4"/>
<circle cx="317" cy="21" r="11" fill="#86b940"/><circle cx="317" cy="21" r="8" fill="#fff"/><circle cx="317" cy="21" r="4.500" fill="none" stroke="#86b940" stroke-width="2.500"/><path d="M322 12L329 8M325 16L331 14M319 10L323 5" stroke="#f08a24" stroke-width="2"/>
<circle cx="366" cy="20" r="11" fill="#143c6e"/><circle cx="370" cy="17" r="4" fill="none" stroke="#d9e4f0" stroke-width="1.600"/><circle cx="360" cy="24" r="3" fill="#d9e4f0"/><path d="M356 22L368 20L362 27Z" fill="#d9e4f0"/>
<path d="M405 31Q405 20 412 18Q407 14 409 10Q413 7 417 9Q421 12 418 18Q427 21 427 31Z" fill="#b91c1c"/><path d="M409 12H420V15H409Z" fill="#222"/><circle cx="416" cy="25" r="3.500" fill="#611"/>
</svg>
<svg style="left:1050px;top:728px" width="200" height="40">
<path d="M6.500 22L12 16.500L17.500 22" fill="none" stroke="#fff" stroke-width="1.200"/>
<rect x="37" y="15" width="15" height="10" fill="none" stroke="#fff" stroke-width="1"/><rect x="39" y="17" width="11" height="6" fill="#fff"/><path d="M52 18H53.500V22H52ZM37 12V20M34 14V18H40V14" stroke="#fff" fill="none"/>
<path d="M71 26A9 9 0 0 1 80 15M74 26A6 6 0 0 1 80 19M77 26A3 3 0 0 1 80 23" fill="none" stroke="#bbb" stroke-width="1"/><rect x="80" y="22" width="4" height="4" fill="#fff"/>
<path d="M101 17H104L108 13.500V25.500L104 22H101Z" fill="none" stroke="#fff"/><path d="M111 16.500Q113 19.500 111 22.500M114 14.500Q117 19.500 114 24.500" fill="none" stroke="#fff"/><path d="M117 13Q121 19.500 117 26" fill="none" stroke="#777"/>
<rect x="132" y="12" width="16" height="15" fill="#fff"/><path d="M135 16H145M135 19H145" stroke="#222"/><circle cx="144" cy="25" r="4" fill="#111" stroke="#fff"/><path d="M141.500 25H146.500" stroke="#fff"/>
<rect x="164" y="13" width="23" height="13" fill="none" stroke="#fff"/><path d="M167 16.500H184M167 19H184" stroke="#fff" stroke-dasharray="1 1"/><path d="M170 22.500H181" stroke="#fff"/>
</svg>
<div class="t tb" style="left:1252px;top:739px">ENG</div>
<div class="t tb" style="left:1291px;top:731px;width:60px;text-align:center">8:10 PM</div>
<div class="t tb" style="left:1291px;top:747px;width:60px;text-align:center">08/30/2016</div>
<div class="a" style="left:1362px;top:728px;width:1px;height:40px;background:#666"></div>
</body></html>
